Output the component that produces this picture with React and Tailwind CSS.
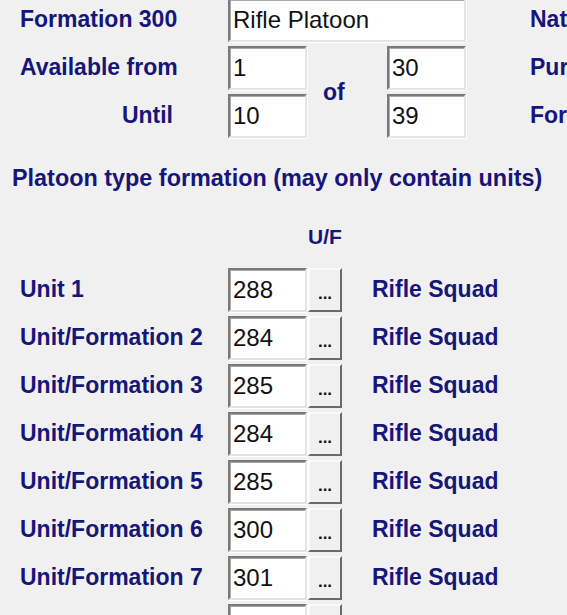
import React from "react";

const FONT = { fontFamily: '"Liberation Sans", Arial, sans-serif' };

const units = [
  { label: "Unit 1", value: "288", name: "Rifle Squad" },
  { label: "Unit/Formation 2", value: "284", name: "Rifle Squad" },
  { label: "Unit/Formation 3", value: "285", name: "Rifle Squad" },
  { label: "Unit/Formation 4", value: "284", name: "Rifle Squad" },
  { label: "Unit/Formation 5", value: "285", name: "Rifle Squad" },
  { label: "Unit/Formation 6", value: "300", name: "Rifle Squad" },
  { label: "Unit/Formation 7", value: "301", name: "Rifle Squad" },
  { label: "", value: "", name: "", hidden: true },
];

function Label({ children, className = "" }) {
  return (
    <div
      className={`flex items-center h-[44px] pb-[2px] text-[23px] font-bold leading-none text-[#16167a] whitespace-nowrap ${className}`}
    >
      {children}
    </div>
  );
}

function Field({ value, className = "" }) {
  return (
    <div
      className={`h-[44px] bg-white border-2 border-t-[#7a7a7a] border-l-[#7a7a7a] border-b-[#e4e4e4] border-r-[#e4e4e4] shadow-[inset_1px_1px_0_#a8a8a8,1px_1px_0_#ffffff] flex items-center pl-[3px] pb-[1px] text-[24px] leading-none text-[#111] whitespace-nowrap overflow-hidden ${className}`}
    >
      {value}
    </div>
  );
}

function DotsButton({ hidden }) {
  return (
    <div className="h-[44px] w-[34px] bg-[#f0f0f0] border-2 border-t-[#fbfbfb] border-l-[#fbfbfb] border-b-[#6a6a6a] border-r-[#6a6a6a] flex items-end justify-center pb-[8px]">
      {!hidden && <span className="text-[17px] font-bold leading-none text-[#111]">...</span>}
    </div>
  );
}

export default function App() {
  return (
    <div className="w-[567px] h-[615px] overflow-hidden bg-[#f0f0f0]" style={FONT}>
      {/* HEADER FIELDS */}
      <div className="grid grid-cols-[208px_79px_80px_79px_64px_120px] grid-rows-[44px_44px_44px] gap-y-[4px] pl-[20px] mt-[-2px] w-[650px]">
        <Label>Formation 300</Label>
        <Field value="Rifle Platoon" className="col-span-3" />
        <div />
        <Label>Nat</Label>

        <Label>Available from</Label>
        <Field value="1" />
        <div className="row-span-2 flex items-center pl-[16px] text-[23px] font-bold leading-none text-[#16167a]">
          of
        </div>
        <Field value="30" />
        <div />
        <Label>Pur</Label>

        <Label className="justify-end pr-[55px]">Until</Label>
        <Field value="10" />
        <Field value="39" />
        <div />
        <Label>For</Label>
      </div>

      {/* SECTION TITLE */}
      <div className="mt-[28px] pl-[12px] text-[23.4px] font-bold leading-[24px] text-[#16167a] whitespace-nowrap">
        Platoon type formation (may only contain units)
      </div>

      <div className="mt-[35px] pl-[308px] text-[21px] font-bold leading-[24px] text-[#16167a]">U/F</div>

      {/* UNITS */}
      <div className="mt-[19px] flex flex-col gap-[4px] pl-[20px]">
        {units.map((u, i) => (
          <div key={i} className="flex items-center">
            <Label className="w-[208px]">{u.label}</Label>
            <Field value={u.value} className="w-[79px]" />
            <div className="ml-[1px]">
              <DotsButton hidden={u.hidden} />
            </div>
            <Label className="ml-[30px]">{u.name}</Label>
          </div>
        ))}
      </div>
    </div>
  );
}
